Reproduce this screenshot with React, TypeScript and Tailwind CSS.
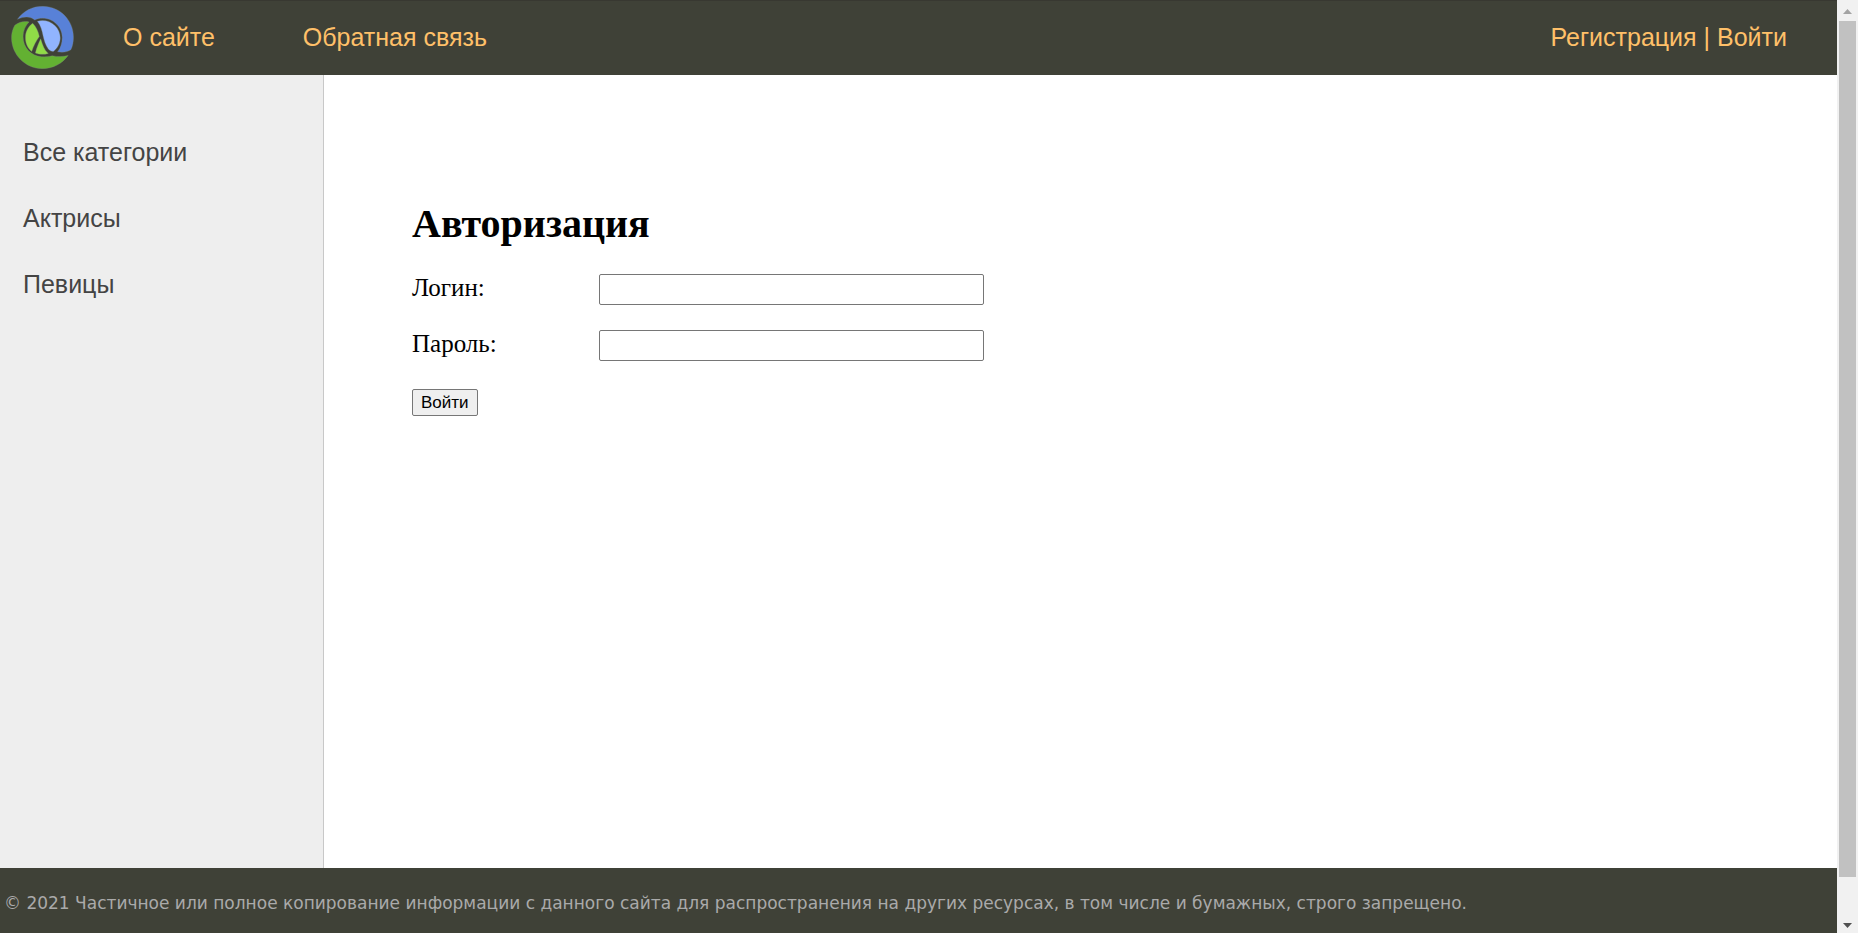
import React from "react";

const categories = ["Все категории", "Актрисы", "Певицы"];

function Logo() {
  return (
    <svg viewBox="33 18 189 190" className="size-[63px]" aria-hidden="true">
      <g stroke="#7f867f" strokeWidth="1" strokeLinejoin="round">
        <path
          fill="#5881d8"
          d="M52 58C70 33 97 19 128 19C180 19 221 61 221 112C221 127 218 140 213 150C203 157 188 159 173 156C182 145 187 130 187 113C187 81 160 55 128 55C119 55 111 57 104 60C92 50 74 48 52 58Z"
        />
        <path
          fill="#63b132"
          d="M87 66C72 62 55 67 44 76C37 88 34 101 34 113C34 165 76 207 127 207C159 207 188 191 205 167C190 171 174 172 157 168C147 171 136 172 125 171C93 169 69 143 69 111C69 93 76 77 87 66Z"
        />
        <path
          fill="#90dc47"
          d="M98 70C84 80 76 95 76 113C76 131 83 146 95 155C100 140 109 122 118 110C115 95 108 79 98 70Z"
        />
        <path
          fill="#90dc47"
          d="M122 117C116 130 109 145 106 160C118 165 133 165 145 161C133 152 128 136 122 117Z"
        />
        <path
          fill="#91b4ff"
          d="M112 64C146 54 181 79 181 114C181 131 173 146 160 155C154 155 149 153 145 148C137 137 132 121 129 107C126 92 122 76 112 64Z"
        />
      </g>
    </svg>
  );
}

function Field({ id, label, type }: { id: string; label: string; type: string }) {
  return (
    <div className="flex items-start">
      <label htmlFor={id} className="w-[187px] text-[25px] leading-7">
        {label}
      </label>
      <input
        id={id}
        type={type}
        className="h-[31px] w-[385px] rounded-xs border border-[#767676] bg-white px-1 text-base"
      />
    </div>
  );
}

function Scrollbar() {
  return (
    <div
      className="flex w-[21px] shrink-0 flex-col items-center bg-[#f1f1f1]"
      aria-hidden="true"
    >
      <svg viewBox="0 0 21 21" className="size-[21px]">
        <path d="M6 14L10.500 9L15 14Z" fill="#a3a3a3" />
      </svg>
      <div className="w-[17px] grow bg-[#c1c1c1]" />
      <div className="h-[35px]" />
      <svg viewBox="0 0 21 21" className="size-[21px]">
        <path d="M6 11L10.500 16L15 11Z" fill="#505050" />
      </svg>
    </div>
  );
}

export default function App() {
  return (
    <div className="flex min-h-screen bg-white">
      <div className="flex min-w-0 grow flex-col">
        <header className="flex h-[75px] shrink-0 items-center border-t border-[#383831] bg-[#3f4137] pr-[50px] pl-[11px] font-['Liberation_Sans',Arial,sans-serif] text-[25px] text-[#ffc069]">
          <a href="#home" aria-label="Главная" className="pb-px">
            <Logo />
          </a>
          <nav className="ml-[49px] flex grow gap-[88px]">
            <a href="#about">О сайте</a>
            <a href="#feedback">Обратная связь</a>
          </nav>
          <div>
            <a href="#register">Регистрация</a> | <a href="#login">Войти</a>
          </div>
        </header>

        <div className="flex grow">
          <aside className="w-[324px] shrink-0 border-r border-[#c8c8c8] bg-[#eeeeee] px-[23px] pt-[63px]">
            <ul className="flex flex-col gap-[38px] font-['Liberation_Sans',Arial,sans-serif] text-[25px] leading-7 text-[#444444]">
              {categories.map((name) => (
                <li key={name}>
                  <a href="#category">{name}</a>
                </li>
              ))}
            </ul>
          </aside>

          <main className="grow px-[88px] pt-[126px] font-['Liberation_Serif','Times_New_Roman',serif] text-black">
            <h1 className="text-[40px] leading-[46px] font-bold">Авторизация</h1>
            <form
              className="mt-[27px] flex flex-col items-start gap-[25px]"
              onSubmit={(event) => event.preventDefault()}
            >
              <Field id="login" label="Логин:" type="text" />
              <Field id="password" label="Пароль:" type="password" />
              <button
                type="submit"
                className="mt-[3px] h-[27px] rounded-xs border border-[#767676] bg-[#efefef] px-2 font-['Liberation_Sans',Arial,sans-serif] text-[17px] leading-5"
              >
                Войти
              </button>
            </form>
          </main>
        </div>

        <footer className="flex h-[65px] shrink-0 items-center bg-[#3f4137] pt-1.5 pl-1 font-[Verdana,'DejaVu_Sans',sans-serif] text-[17px] text-[#aaaaaa]">
          <p>
            © 2021 Частичное или полное копирование информации с данного сайта для
            распространения на других ресурсах, в том числе и бумажных, строго
            запрещено.
          </p>
        </footer>
      </div>
      <Scrollbar />
    </div>
  );
}
